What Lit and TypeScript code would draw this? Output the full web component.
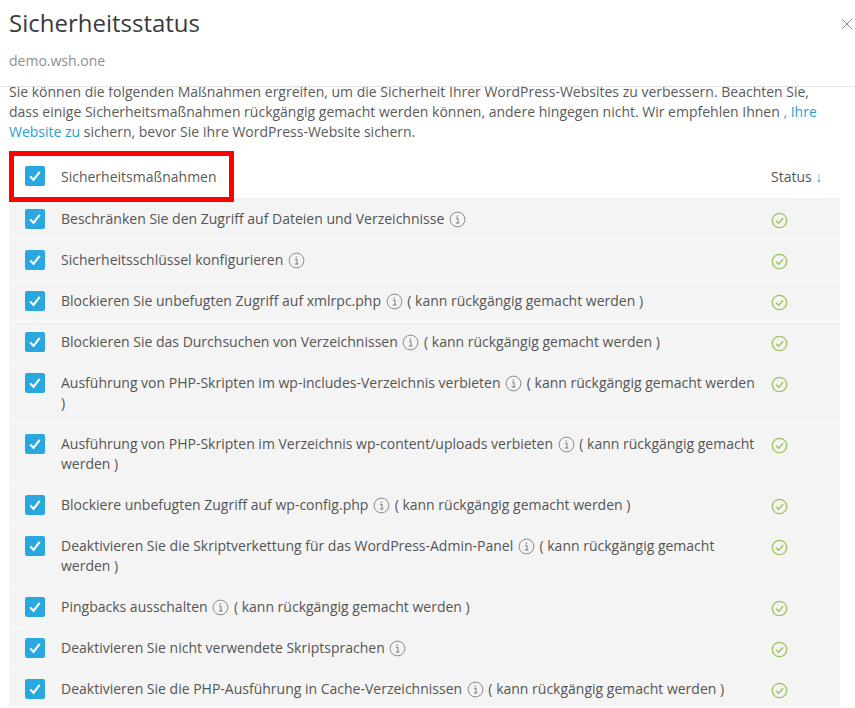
import { LitElement, html, css, svg } from "lit";
import { customElement } from "lit/decorators.js";

const NOTE = "( kann rückgängig gemacht werden )";
const rows: { text: string; note?: boolean }[] = [
  { text: "Beschränken Sie den Zugriff auf Dateien und Verzeichnisse" },
  { text: "Sicherheitsschlüssel konfigurieren" },
  { text: "Blockieren Sie unbefugten Zugriff auf xmlrpc.php", note: true },
  { text: "Blockieren Sie das Durchsuchen von Verzeichnissen", note: true },
  { text: "Ausführung von PHP-Skripten im wp-includes-Verzeichnis verbieten", note: true },
  { text: "Ausführung von PHP-Skripten im Verzeichnis wp-content/uploads verbieten", note: true },
  { text: "Blockiere unbefugten Zugriff auf wp-config.php", note: true },
  { text: "Deaktivieren Sie die Skriptverkettung für das WordPress-Admin-Panel", note: true },
  { text: "Pingbacks ausschalten", note: true },
  { text: "Deaktivieren Sie nicht verwendete Skriptsprachen" },
  { text: "Deaktivieren Sie die PHP-Ausführung in Cache-Verzeichnissen", note: true },
];

const checkbox = html`<span class="cb"><svg width="20" height="20" viewBox="0 0 20 20"><path d="M5.2 10.4l3.3 3.5 6.2-8" fill="none" stroke="#fff" stroke-width="2.1"/></svg></span>`;
const info = html`<svg class="info" width="17" height="17" viewBox="0 0 17 17"><circle cx="8.5" cy="8.5" r="7.4" fill="none" stroke="#8a8a8a" stroke-width="1"/>${svg`<path d="M7 7.3h2v4.6M6.8 12h3.6M8.3 4.4v1.5" fill="none" stroke="#777" stroke-width="1"/>`}</svg>`;
const ok = html`<svg class="ok" width="17" height="17" viewBox="0 0 17 17"><circle cx="8.5" cy="8.5" r="7.2" fill="none" stroke="#9cc35c" stroke-width="1.3"/><path d="M5 8.7l2.6 2.6 4.5-5" fill="none" stroke="#9cc35c" stroke-width="1.3"/></svg>`;

@customElement("app-root")
export class AppRoot extends LitElement {
  static styles = css`
    :host { display: block; width: 855px; height: 708px; overflow: hidden; position: relative; background: #fff;
      font-family: "Open Sans", sans-serif; font-size: 14px; line-height: 20px; color: #555; }
    .head { height: 87px; box-sizing: border-box; padding: 8px 9px 0; position: relative; border-bottom: 1px solid #e3e3e6; }
    h1 { margin: 0; font-size: 24px; font-weight: 400; line-height: 30px; color: #3a3a3a; }
    .sub { margin-top: 13px; color: #8f8f8f; line-height: 20px; }
    .close { position: absolute; right: 1px; top: 17px; }
    .body { height: 620px; overflow: hidden; padding: 0 15px 0 9px; }
    .intro { margin: -5px 0 10px; color: #5a5a5a; }
    a { color: #2a9fd0; text-decoration: none; }
    .row { display: flex; align-items: flex-start; box-sizing: border-box; background: #f4f4f4; border-bottom: 1px solid #fbfbfb; padding: 10px 0 10px 16px; }
    .row.top { background: #fff; border-bottom: 1px solid #ececec; padding: 14px 0 11px 16px; height: 47px; }
    .cb { flex: none; width: 20px; height: 20px; background: #29a8e0; border-radius: 2px; display: block; margin-right: 16px; }
    .cb svg { display: block; }
    .label { width: 697px; flex: none; }
    .top .label { color: #5a5a5a; padding-top: 1px; }
    .status { margin-left: 13px; white-space: nowrap; }
    .top .status { padding-top: 1px; }
    .status b { font-weight: 400; color: #2a9fd0; }
    .ok { display: block; margin-top: 3px; }
    .info { vertical-align: -4px; margin: 0 1px; }
    .mark { position: absolute; left: 9px; top: 151px; width: 225px; height: 51px; box-sizing: border-box; border: 5px solid #f00; }
  `;

  render() {
    return html`
      <div class="head">
        <h1>Sicherheitsstatus</h1>
        <div class="sub">demo.wsh.one</div>
        <svg class="close" width="14" height="14" viewBox="0 0 14 14"><path d="M2 2l10 10M12 2L2 12" stroke="#8a8a8a" stroke-width="1" fill="none"/></svg>
      </div>
      <div class="body">
        <p class="intro">Sie können die folgenden Maßnahmen ergreifen, um die Sicherheit Ihrer WordPress-Websites zu verbessern. Beachten Sie, dass einige Sicherheitsmaßnahmen rückgängig gemacht werden können, andere hingegen nicht. Wir empfehlen Ihnen <a>, Ihre Website zu</a> sichern, bevor Sie Ihre WordPress-Website sichern.</p>
        <div class="row top">
          ${checkbox}
          <div class="label">Sicherheitsmaßnahmen</div>
          <div class="status">Status <b>↓</b></div>
        </div>
        ${rows.map(
          (r) => html`<div class="row">
            ${checkbox}
            <div class="label">${r.text} ${info}${r.note ? html` ${NOTE}` : ""}</div>
            <div class="status">${ok}</div>
          </div>`
        )}
      </div>
      <div class="mark"></div>
    `;
  }
}
